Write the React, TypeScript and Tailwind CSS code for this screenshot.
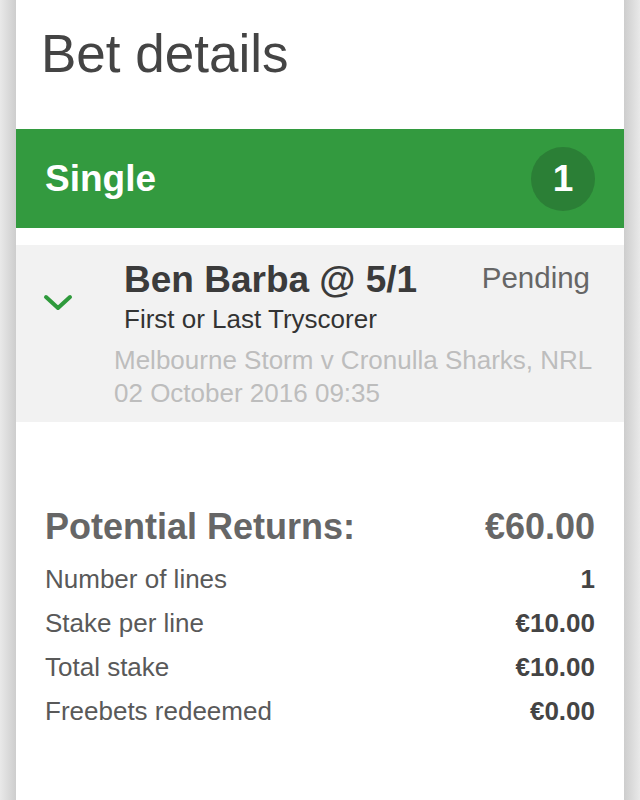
import React from 'react';

const rows = [
    { label: 'Number of lines', value: '1' },
    { label: 'Stake per line', value: '€10.00' },
    { label: 'Total stake', value: '€10.00' },
    { label: 'Freebets redeemed', value: '€0.00' },
];

export default function App() {
    return (
        <div className="flex min-h-screen w-[640px] font-['Liberation_Sans',Arial,sans-serif]">
            <div className="w-4 bg-gradient-to-r from-[#e9e9e9] to-[#cdcdcd]" />
            <div className="flex w-[608px] flex-col bg-white">
                {/* TITLE */}
                <div className="h-[129px] pl-[25px] pt-[28px]">
                    <h1 className="text-[53px] leading-[52px] text-[#444444]">Bet details</h1>
                </div>

                {/* SINGLE BAR */}
                <div className="flex h-[99px] items-center justify-between bg-[#339a3f] pl-[29px] pr-[29px]">
                    <span className="text-[37px] font-bold text-white">Single</span>
                    <div className="flex h-[64px] w-[64px] items-center justify-center rounded-full bg-[#2b7f36] text-[37px] font-bold text-white">
                        1
                    </div>
                </div>

                {/* BET ITEM */}
                <div className="mt-[17px] h-[177px] bg-[#f2f2f2] pt-[15px]">
                    <div className="flex items-start">
                        <div className="w-[108px] pl-[27px] pt-[33px]">
                            <svg width="30" height="18" viewBox="0 0 30 18" fill="none">
                                <path d="M3 4 L15 15 L27 4" stroke="#2f9a3c" strokeWidth="4" strokeLinecap="round" strokeLinejoin="round" />
                            </svg>
                        </div>
                        <div className="flex-1">
                            <div className="text-[37px] font-bold leading-[40px] text-[#3b3b3b]">Ben Barba @ 5/1</div>
                            <div className="mt-px text-[26px] leading-[36px] text-[#333333]">First or Last Tryscorer</div>
                        </div>
                        <div className="pr-[34px] text-[29.5px] leading-[36px] text-[#666666]">Pending</div>
                    </div>
                    <div className="mt-[7px] pl-[98px] text-[26px] leading-[33px] text-[#bdbdbd]">
                        <div>Melbourne Storm v Cronulla Sharks, NRL</div>
                        <div>02 October 2016 09:35</div>
                    </div>
                </div>

                {/* RETURNS */}
                <div className="mt-[85px] px-[29px]">
                    <div className="flex justify-between text-[36px] font-bold leading-[40px] text-[#666666]">
                        <span>Potential Returns:</span>
                        <span>€60.00</span>
                    </div>
                    <div className="mt-[10px]">
                        {rows.map((row) => (
                            <div key={row.label} className="flex justify-between text-[26px] leading-[44px]">
                                <span className="text-[#595959]">{row.label}</span>
                                <span className="font-bold text-[#444444]">{row.value}</span>
                            </div>
                        ))}
                    </div>
                </div>
            </div>
            <div className="w-4 bg-gradient-to-r from-[#cdcdcd] to-[#e9e9e9]" />
        </div>
    );
}
